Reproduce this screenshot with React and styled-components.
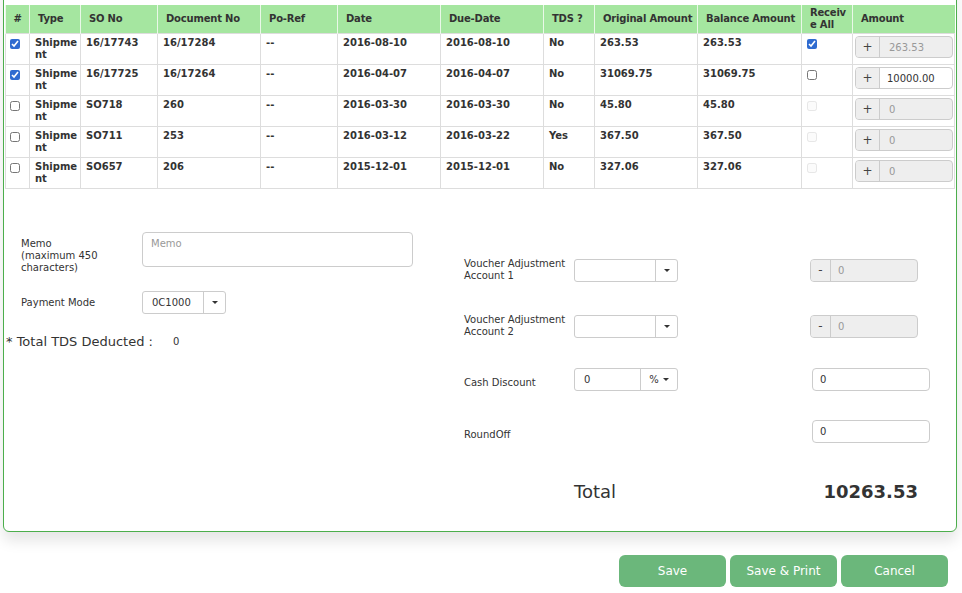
import React from "react";
import styled, { createGlobalStyle } from "styled-components";

const GlobalStyle = createGlobalStyle`
    body {
        margin: 0;
        background: #fff;
        font-family: "DejaVu Sans", Verdana, sans-serif;
        color: #333;
    }
`;

const Page = styled.div`
    width: 962px;
    height: 593px;
    overflow: hidden;
`;

const Card = styled.div`
    margin: -20px 5px 0 3px;
    padding: 24px 1px 27px;
    border: 1px solid #4cae4c;
    border-radius: 6px;
    background: #fff;
    box-shadow: 0 9px 14px rgba(0, 0, 0, 0.1);
`;

const Table = styled.table`
    width: 949px;
    table-layout: fixed;
    border-collapse: collapse;
    font-size: 10px;
    line-height: 12px;
    font-weight: bold;
`;

const Th = styled.th`
    background: #a5e6a0;
    text-align: ${props => (props.center ? "center" : "left")};
    padding: ${props => (props.center ? "2px 2px" : "2px 2px 2px 8px")};
    height: 24px;
    border-left: 1px solid #eaf8e8;
    word-break: ${props => (props.wrap ? "break-all" : "normal")};
    white-space: ${props => (props.wrap ? "normal" : "nowrap")};
    letter-spacing: -0.2px;
    vertical-align: middle;
`;

const Td = styled.td`
    padding: ${props => props.pad || "3px 5px"};
    height: 24px;
    border: 1px solid #ddd;
    vertical-align: top;
    word-break: break-all;
`;

const Check = styled.input.attrs({ type: "checkbox", readOnly: true })`
    width: 10px;
    height: 10px;
    margin: 2px 0 0;
    accent-color: #2f6bd0;
    opacity: ${props => (props.disabled ? 0.5 : 1)};
`;

const Group = styled.div`
    display: flex;
    box-sizing: border-box;
    width: ${props => (props.w ? `${props.w}px` : "100%")};
    height: ${props => props.h || 23}px;
    border: 1px solid #ccc;
    border-radius: 4px;
    overflow: hidden;
    background: ${props => (props.muted ? "#eee" : "#fff")};
    font-weight: normal;
`;

const Addon = styled.span`
    flex: none;
    width: ${props => props.w}px;
    display: flex;
    align-items: center;
    justify-content: center;
    background: #eee;
    border-right: 1px solid #ccc;
    font-size: 12px;
    color: #444;
`;

const GroupInput = styled.input.attrs({ readOnly: true })`
    flex: 1;
    min-width: 0;
    border: none;
    outline: none;
    background: transparent;
    padding: 0 ${props => props.px || 8}px;
    font: 10px "DejaVu Sans", Verdana, sans-serif;
    color: ${props => (props.muted ? "#999" : "#333")};
`;

const Bottom = styled.div`
    display: grid;
    grid-template-columns: 436px 1fr;
    font-size: 10px;
    line-height: 12px;
`;

const Left = styled.div`
    padding-top: 43px;
`;

const FieldRow = styled.div`
    display: grid;
    grid-template-columns: 121px auto;
    align-items: ${props => (props.top ? "start" : "center")};
    padding-left: 16px;
    margin-bottom: ${props => props.mb || 0}px;
`;

const Label = styled.label`
    padding-top: ${props => props.pt || 0}px;
`;

const Memo = styled.textarea`
    box-sizing: border-box;
    width: 271px;
    height: 35px;
    border: 1px solid #ccc;
    border-radius: 4px;
    padding: 5px 8px;
    resize: none;
    font: 10px/12px "DejaVu Sans", Verdana, sans-serif;
    &::placeholder {
        color: #999;
    }
`;

const Select = styled.div`
    display: flex;
    box-sizing: border-box;
    width: ${props => props.w}px;
    height: 23px;
    border: 1px solid #ccc;
    border-radius: 3px;
    background: #fff;
`;

const SelectValue = styled.span`
    flex: 1;
    display: flex;
    align-items: center;
    padding: 0 9px;
`;

const Caret = styled.span`
    flex: none;
    width: ${props => props.w}px;
    display: flex;
    align-items: center;
    justify-content: center;
    gap: 4px;
    border-left: 1px solid #ccc;
    &::after {
        content: "";
        border-left: 3px solid transparent;
        border-right: 3px solid transparent;
        border-top: 3px solid #333;
    }
`;

const Tds = styled.div`
    margin-top: 20px;
    padding-left: 1px;
    display: flex;
    align-items: center;
    font-size: 13px;
    line-height: 16px;
    span {
        font-size: 10px;
        margin-left: 20px;
    }
`;

const Right = styled.div`
    padding: 69px 0 0 23px;
`;

const RRow = styled.div`
    display: grid;
    grid-template-columns: 110px 104px 132px auto;
    align-items: center;
    height: 23px;
    margin-top: ${props => props.mt || 0}px;
`;

const PlainInput = styled.input.attrs({ readOnly: true })`
    box-sizing: border-box;
    width: 118px;
    height: 23px;
    margin-left: 2px;
    border: 1px solid #ccc;
    border-radius: 4px;
    padding: 0 7px;
    font: 10px "DejaVu Sans", Verdana, sans-serif;
    color: #333;
    outline: none;
`;

const TotalRow = styled.div`
    display: grid;
    grid-template-columns: 110px 236px 108px;
    align-items: center;
    height: 24px;
    margin-top: 37px;
    font-size: 18px;
    line-height: 24px;
    b {
        text-align: right;
    }
`;

const Actions = styled.div`
    display: flex;
    justify-content: flex-end;
    gap: 4px;
    margin-top: 23px;
    padding-right: 14px;
`;

const Button = styled.button`
    width: 107px;
    height: 32px;
    border: none;
    border-radius: 6px;
    background: #6bb77b;
    color: #fff;
    font: 12px "DejaVu Sans", Verdana, sans-serif;
`;

const cols = [24, 51, 77, 103, 77, 103, 103, 51, 103, 104, 51, 102];
const headers = ["#", "Type", "SO No", "Document No", "Po-Ref", "Date", "Due-Date", "TDS ?", "Original Amount", "Balance Amount", "Receive All", "Amount"];

const rows = [
    { sel: true, so: "16/17743", doc: "16/17284", date: "2016-08-10", due: "2016-08-10", tds: "No", orig: "263.53", bal: "263.53", all: true, amount: "263.53", muted: true },
    { sel: true, so: "16/17725", doc: "16/17264", date: "2016-04-07", due: "2016-04-07", tds: "No", orig: "31069.75", bal: "31069.75", all: false, amount: "10000.00", muted: false },
    { sel: false, so: "SO718", doc: "260", date: "2016-03-30", due: "2016-03-30", tds: "No", orig: "45.80", bal: "45.80", amount: "0", muted: true },
    { sel: false, so: "SO711", doc: "253", date: "2016-03-12", due: "2016-03-22", tds: "Yes", orig: "367.50", bal: "367.50", amount: "0", muted: true },
    { sel: false, so: "SO657", doc: "206", date: "2015-12-01", due: "2015-12-01", tds: "No", orig: "327.06", bal: "327.06", amount: "0", muted: true },
];

const AmountGroup = ({ value, muted }) => (
    <Group h={22} muted={muted}>
        <Addon w={23}>+</Addon>
        <GroupInput value={value} muted={muted} px={muted ? 9 : 7} />
    </Group>
);

const Dropdown = ({ w, value, caretW = 21, caretText }) => (
    <Select w={w}>
        <SelectValue>{value}</SelectValue>
        <Caret w={caretW}>{caretText}</Caret>
    </Select>
);

const Adjust = () => (
    <Group w={108} muted>
        <Addon w={19}>-</Addon>
        <GroupInput value="0" muted px={7} />
    </Group>
);

export default function App() {
    return (
        <Page>
            <GlobalStyle />
            <Card>
                <Table>
                    <colgroup>
                        {cols.map((w, i) => (
                            <col key={i} style={{ width: w }} />
                        ))}
                    </colgroup>
                    <thead>
                        <tr>
                            {headers.map((h, i) => (
                                <Th key={h} center={i === 0} wrap={i === 10}>
                                    {h}
                                </Th>
                            ))}
                        </tr>
                    </thead>
                    <tbody>
                        {rows.map(r => (
                            <tr key={r.so}>
                                <Td pad="3px 4px">
                                    <Check checked={r.sel} />
                                </Td>
                                <Td pad="3px 2px 3px 5px">Shipment</Td>
                                <Td>{r.so}</Td>
                                <Td>{r.doc}</Td>
                                <Td>--</Td>
                                <Td>{r.date}</Td>
                                <Td>{r.due}</Td>
                                <Td>{r.tds}</Td>
                                <Td>{r.orig}</Td>
                                <Td>{r.bal}</Td>
                                <Td pad="3px 5px">
                                    <Check checked={!!r.all} disabled={!r.sel} />
                                </Td>
                                <Td pad="2px 1px 0 2px">
                                    <AmountGroup value={r.amount} muted={r.muted} />
                                </Td>
                            </tr>
                        ))}
                    </tbody>
                </Table>

                <Bottom>
                    <Left>
                        <FieldRow top mb={17}>
                            <Label pt={6}>
                                Memo
                                <br />
                                (maximum 450
                                <br />
                                characters)
                            </Label>
                            <Memo placeholder="Memo" />
                        </FieldRow>
                        <FieldRow>
                            <Label>Payment Mode</Label>
                            <Dropdown w={84} value="0C1000" />
                        </FieldRow>
                        <Tds>
                            * Total TDS Deducted :<span>0</span>
                        </Tds>
                    </Left>

                    <Right>
                        <RRow>
                            <Label>
                                Voucher Adjustment
                                <br />
                                Account 1
                            </Label>
                            <Dropdown w={104} />
                            <span />
                            <Adjust />
                        </RRow>
                        <RRow mt={33}>
                            <Label>
                                Voucher Adjustment
                                <br />
                                Account 2
                            </Label>
                            <Dropdown w={104} />
                            <span />
                            <Adjust />
                        </RRow>
                        <RRow mt={31}>
                            <Label pt={6}>Cash Discount</Label>
                            <Dropdown w={104} value="0" caretW={36} caretText="%" />
                            <span />
                            <PlainInput value="0" />
                        </RRow>
                        <RRow mt={29}>
                            <Label pt={6}>RoundOff</Label>
                            <span />
                            <span />
                            <PlainInput value="0" />
                        </RRow>
                        <TotalRow>
                            <span />
                            <span>Total</span>
                            <b>10263.53</b>
                        </TotalRow>
                    </Right>
                </Bottom>
            </Card>

            <Actions>
                <Button>Save</Button>
                <Button>Save &amp; Print</Button>
                <Button>Cancel</Button>
            </Actions>
        </Page>
    );
}
